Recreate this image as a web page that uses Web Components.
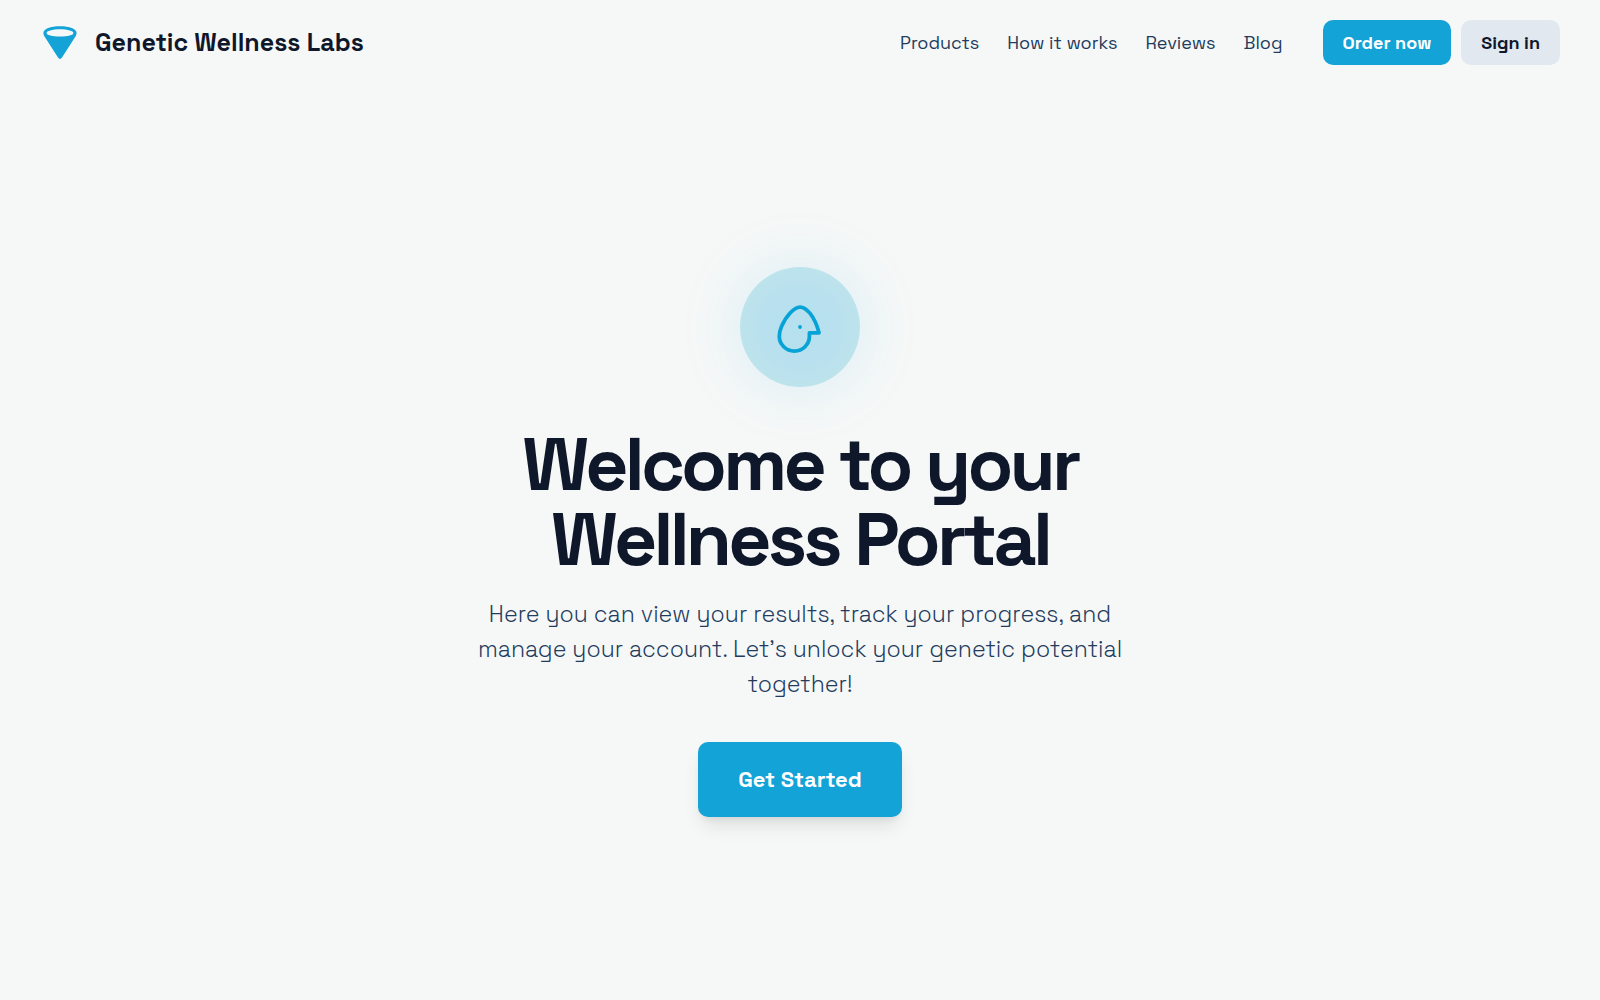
<!DOCTYPE html>
<html lang="en">
<head>
<meta charset="utf-8">
<meta name="viewport" content="width=device-width, initial-scale=1">
<title>Genetic Wellness Labs</title>
<style>
  html, body { margin: 0; }
  body {
    --brand: #13a3d7;
    --ink: #0f172a;
    --muted: #233c5e;
    background: #f6f8f7;
    color: var(--ink);
    font-family: "Space Grotesk", Inter, sans-serif;
  }
</style>
</head>
<body>
<portal-page>
  <site-header slot="header">
    <brand-logo slot="brand">Genetic Wellness Labs</brand-logo>
    <nav-link slot="nav" href="#products">Products</nav-link>
    <nav-link slot="nav" href="#how">How it works</nav-link>
    <nav-link slot="nav" href="#reviews">Reviews</nav-link>
    <nav-link slot="nav" href="#blog">Blog</nav-link>
    <action-button slot="actions">Order now</action-button>
    <action-button slot="actions" variant="secondary">Sign in</action-button>
  </site-header>
  <welcome-hero>
    <hero-badge slot="badge"></hero-badge>
    <span slot="title">Welcome to your Wellness Portal</span>
    <span slot="text">Here you can view your results, track your progress, and manage your account. Let’s unlock your genetic potential together!</span>
    <action-button slot="action" variant="large">Get Started</action-button>
  </welcome-hero>
</portal-page>
<script>
  const define = (name, html, setup) => customElements.define(name, class extends HTMLElement {
    constructor() {
      super();
      this.attachShadow({ mode: "open" }).innerHTML = html;
    }
    connectedCallback() {
      if (setup) setup(this, this.shadowRoot);
    }
  });

  define("portal-page", `
    <style>
      :host { display: flex; flex-direction: column; min-height: 100vh; }
      main { flex: 1; display: flex; align-items: center; justify-content: center; padding-bottom: 1px; }
    </style>
    <slot name="header"></slot>
    <main><slot></slot></main>`);

  define("site-header", `
    <style>
      :host { display: block; }
      header { display: flex; align-items: center; justify-content: space-between; padding: 20px 40px; }
      .end { display: flex; align-items: center; gap: 40px; }
      nav { display: flex; gap: 28px; }
      .actions { display: flex; gap: 10px; }
    </style>
    <header>
      <slot name="brand"></slot>
      <div class="end">
        <nav aria-label="Main"><slot name="nav"></slot></nav>
        <div class="actions"><slot name="actions"></slot></div>
      </div>
    </header>`);

  define("brand-logo", `
    <style>
      :host { display: block; }
      a { display: flex; align-items: center; gap: 15px; color: var(--ink); text-decoration: none; font-size: 25px; line-height: 31px; font-weight: 600; }
      svg { display: block; width: 40px; height: 40px; }
    </style>
    <a href="#home">
      <svg viewBox="0 0 40 40" aria-hidden="true">
        <path fill="var(--brand)" fill-rule="evenodd" d="M20 3.2C29.5 3.2 36.6 5.7 36.6 10C36.6 11 36.3 12 35.8 13L22 34.6Q20 37.4 18 34.6L4.2 13C3.7 12 3.4 11 3.4 10C3.4 5.7 10.5 3.2 20 3.2ZM20 6.2C12 6.2 6.6 8 6.6 10C6.6 12.1 12 13.6 20 13.6S33.4 12.1 33.4 10C33.4 8 28 6.2 20 6.2Z"/>
      </svg>
      <slot></slot>
    </a>`);

  define("nav-link", `
    <style>
      :host { display: block; }
      a { display: block; color: var(--muted); text-decoration: none; font-size: 18px; line-height: 25px; }
    </style>
    <a><slot></slot></a>`,
    (el, root) => { root.querySelector("a").href = el.getAttribute("href"); });

  define("action-button", `
    <style>
      :host { display: block; }
      button { display: block; border: 0; border-radius: 10px; padding: 10px 20px; background: var(--brand); color: #fff; font: inherit; font-size: 18px; line-height: 25px; font-weight: 600; cursor: pointer; }
      :host([variant="secondary"]) button { background: #e2e8f0; color: var(--ink); }
      :host([variant="large"]) button { padding: 20px 40px; font-size: 22px; line-height: 35px; box-shadow: 0 12px 19px -4px rgb(0 0 0 / 10%), 0 5px 8px -5px rgb(0 0 0 / 10%); }
    </style>
    <button type="button"><slot></slot></button>`);

  define("hero-badge", `
    <style>
      :host { display: grid; place-items: center; width: 120px; height: 120px; border-radius: 50%; background: radial-gradient(circle closest-side, #b7e0ef 0, #b8e0ee 60%, #bde3ec 100%); box-shadow: 0 0 64px rgb(40 170 240 / 15%); }
      svg { display: block; width: 60px; height: 60px; }
    </style>
    <svg viewBox="0 0 60 60" fill="none" stroke="#08a3d6" stroke-width="3.75" stroke-linecap="round" stroke-linejoin="round" aria-hidden="true">
      <path d="M49 35.8C44.5 18.5 36 10 30 10C24.5 10 16.5 18 11.5 29.5C10 33 9.3 36 9.3 39.3C9.3 47.5 16.1 54.1 24.4 54.1S39.4 47.5 39.4 39.3V35.8Z"/>
      <circle cx="30" cy="30" r="1.9" fill="#08a3d6" stroke="none"/>
    </svg>`);

  define("welcome-hero", `
    <style>
      :host { display: flex; flex-direction: column; align-items: center; width: 100%; max-width: 660px; text-align: center; }
      h1 { margin: 40px 0 20px; font-size: 75px; line-height: 75px; font-weight: 700; letter-spacing: -0.05em; }
      p { margin: 0 0 40px; color: var(--muted); font-size: 23px; line-height: 35px; font-weight: 300; }
    </style>
    <slot name="badge"></slot>
    <h1><slot name="title"></slot></h1>
    <p><slot name="text"></slot></p>
    <slot name="action"></slot>`);
</script>
</body>
</html>
